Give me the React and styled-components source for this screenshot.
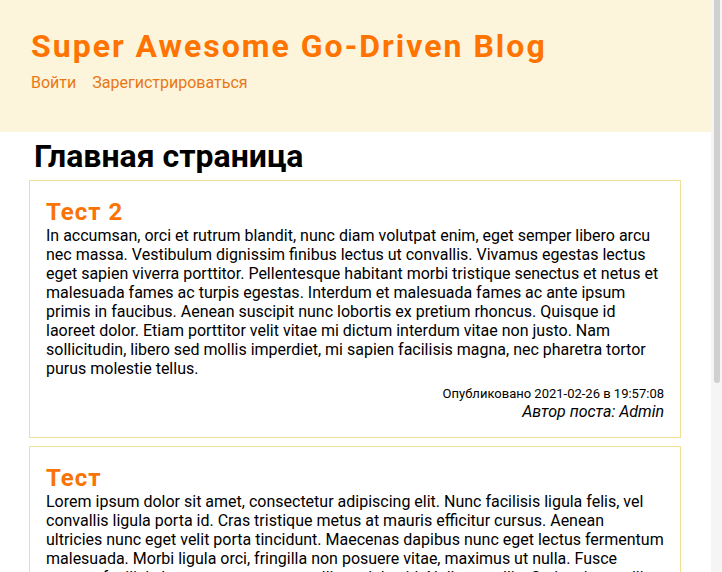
import React from 'react';
import styled, { createGlobalStyle } from 'styled-components';

const GlobalStyle = createGlobalStyle`
  * { box-sizing: border-box; }
  body {
    margin: 0;
    background: #fff;
    color: #000;
    font: 16px/19px Roboto, sans-serif;
  }
`;

const Shell = styled.div`
  display: flex;
  height: 100vh;
  overflow: hidden;
`;

const Page = styled.div`
  flex: 1;
  min-width: 0;
  overflow: hidden;
`;

const Header = styled.header`
  padding: 27px 31px 40px;
  background: #fcf5dc;
`;

const SiteTitle = styled.h1`
  margin: 0;
  color: #ff7300;
  font-size: 32px;
  line-height: 38px;
  letter-spacing: 2px;
`;

const Nav = styled.nav`
  display: flex;
  gap: 16px;
  padding-top: 8px;
`;

const NavLink = styled.a`
  color: #e87817;
  text-decoration: none;
`;

const Main = styled.main`
  display: flex;
  flex-direction: column;
  gap: 8px;
  padding: 5px 30px 8px 29px;
`;

const PageTitle = styled.h2`
  margin: 0 0 -3px;
  padding-left: 5px;
  font-size: 32px;
  line-height: 38px;
`;

const Post = styled.article`
  padding: 17px 16px 16px;
  border: 1px solid #f0e094;
`;

const PostTitle = styled.h3`
  margin: 0;
  color: #f97306;
  font-size: 24px;
  line-height: 28px;
  letter-spacing: 1px;
`;

const PostText = styled.p`
  margin: 0;
`;

const PostMeta = styled.footer`
  display: flex;
  flex-direction: column;
  align-items: flex-end;
  padding-top: 8px;
`;

const Published = styled.time`
  font-size: 13px;
  line-height: 16px;
`;

const Author = styled.em`
  line-height: 19px;
`;

const ScrollTrack = styled.div`
  flex: none;
  width: 11px;
  padding: 0 2px 0 3px;
  background: #f5f5f5;
`;

const ScrollThumb = styled.div`
  height: 67%;
  border-radius: 0 0 3px 3px;
  background: #d0d0d0;
`;

const posts = [
  {
    title: 'Тест 2',
    text: 'In accumsan, orci et rutrum blandit, nunc diam volutpat enim, eget semper libero arcu nec massa. Vestibulum dignissim finibus lectus ut convallis. Vivamus egestas lectus eget sapien viverra porttitor. Pellentesque habitant morbi tristique senectus et netus et malesuada fames ac turpis egestas. Interdum et malesuada fames ac ante ipsum primis in faucibus. Aenean suscipit nunc lobortis ex pretium rhoncus. Quisque id laoreet dolor. Etiam porttitor velit vitae mi dictum interdum vitae non justo. Nam sollicitudin, libero sed mollis imperdiet, mi sapien facilisis magna, nec pharetra tortor purus molestie tellus.',
    date: '2021-02-26 в 19:57:08',
    author: 'Admin',
  },
  {
    title: 'Тест',
    text: 'Lorem ipsum dolor sit amet, consectetur adipiscing elit. Nunc facilisis ligula felis, vel convallis ligula porta id. Cras tristique metus at mauris efficitur cursus. Aenean ultricies nunc eget velit porta tincidunt. Maecenas dapibus nunc eget lectus fermentum malesuada. Morbi ligula orci, fringilla non posuere vitae, maximus ut nulla. Fusce congue facilisis lacus, non posuere mollis sodales id. Nulla a mollis. Sed varius mollis ligula id enim viverra.',
    date: '2021-02-26 в 19:56:42',
    author: 'Admin',
  },
];

export default function App() {
  return (
    <>
      <GlobalStyle />
      <Shell>
        <Page>
          <Header>
            <SiteTitle>Super Awesome Go-Driven Blog</SiteTitle>
            <Nav>
              <NavLink href="#login">Войти</NavLink>
              <NavLink href="#register">Зарегистрироваться</NavLink>
            </Nav>
          </Header>
          <Main>
            <PageTitle>Главная страница</PageTitle>
            {posts.map((post) => (
              <Post key={post.title}>
                <PostTitle>{post.title}</PostTitle>
                <PostText>{post.text}</PostText>
                <PostMeta>
                  <Published>Опубликовано {post.date}</Published>
                  <Author>Автор поста: {post.author}</Author>
                </PostMeta>
              </Post>
            ))}
          </Main>
        </Page>
        <ScrollTrack>
          <ScrollThumb />
        </ScrollTrack>
      </Shell>
    </>
  );
}
